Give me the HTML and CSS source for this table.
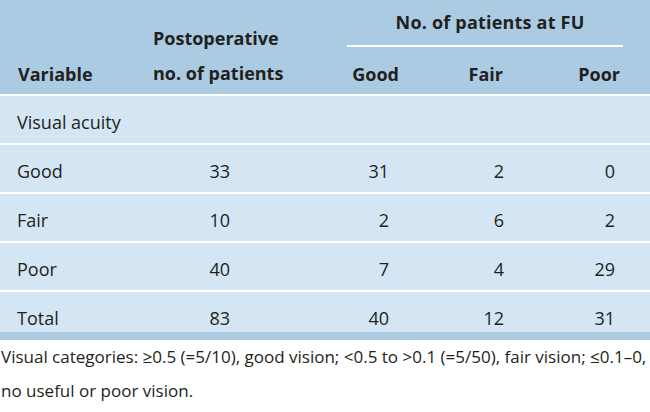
FILE: index.html
```html
<!DOCTYPE html>
<html>
<head>
<meta charset="utf-8">
<link rel="stylesheet" href="styles.css">
</head>
<body>
<table class="data">
  <colgroup>
    <col class="c-var"><col class="c-post"><col class="c-good"><col class="c-fair"><col class="c-poor">
  </colgroup>
  <thead>
    <tr>
      <th rowspan="2" class="h-var">Variable</th>
      <th rowspan="2" class="h-post">Postoperative<br>no. of patients</th>
      <th colspan="3" class="h-group"><div class="group-label">No. of patients at FU</div></th>
    </tr>
    <tr>
      <th class="h-sub h-good">Good</th>
      <th class="h-sub h-fair">Fair</th>
      <th class="h-sub h-poor">Poor</th>
    </tr>
  </thead>
  <tbody>
    <tr><td class="lbl">Visual acuity</td><td></td><td></td><td></td><td></td></tr>
    <tr><td class="lbl">Good</td><td class="n-post">33</td><td class="n-good">31</td><td class="n-fair">2</td><td class="n-poor">0</td></tr>
    <tr><td class="lbl">Fair</td><td class="n-post">10</td><td class="n-good">2</td><td class="n-fair">6</td><td class="n-poor">2</td></tr>
    <tr><td class="lbl">Poor</td><td class="n-post">40</td><td class="n-good">7</td><td class="n-fair">4</td><td class="n-poor">29</td></tr>
    <tr class="total"><td class="lbl">Total</td><td class="n-post">83</td><td class="n-good">40</td><td class="n-fair">12</td><td class="n-poor">31</td></tr>
  </tbody>
</table>
<p class="note"><span class="note-line">Visual categories: ≥0.5 (=5/10), good vision; &lt;0.5 to &gt;0.1 (=5/50), fair vision; ≤0.1–0,</span><br>no useful or poor vision.</p>
</body>
</html>
```

FILE: styles.css
```css
html, body {
  margin: 0;
  padding: 0;
  background: #ffffff;
  overflow: hidden;
}
body {
  width: 650px;
  height: 412px;
  font-family: "Open Sans", "DejaVu Sans", sans-serif;
  color: #231f20;
}
.data {
  width: 650px;
  table-layout: fixed;
  border-collapse: separate;
  border-spacing: 0;
  font-size: 18px;
  line-height: 24px;
}
.c-var { width: 145px; }
.c-post { width: 155px; }
.c-good { width: 130px; }
.c-fair { width: 110px; }
.c-poor { width: 110px; }

thead th {
  background: #aacbe1;
  font-weight: 700;
  vertical-align: top;
  padding: 0;
  white-space: nowrap;
}
.h-var {
  text-align: left;
  padding: 62px 0 8px 18px;
}
.h-post {
  text-align: left;
  line-height: 35px;
  padding: 21px 0 3px 8px;
}
.h-group {
  height: 47px;
}
.group-label {
  margin: 0 27px 0 47px;
  padding: 10px 0 11px 10px;
  border-bottom: 2px solid #ffffff;
  text-align: center;
  letter-spacing: 0.2px;
}
.h-sub {
  text-align: right;
  padding-top: 15px;
  padding-bottom: 8px;
}
.h-good { padding-right: 31px; }
.h-fair { padding-right: 37px; }
.h-poor { padding-right: 30px; }

tbody td {
  background: #d4e6f4;
  border-top: 2px solid #ffffff;
  padding: 14px 0 9px 0;
  vertical-align: top;
  white-space: nowrap;
  font-weight: 400;
}
tbody .lbl {
  text-align: left;
  padding-left: 17px;
}
.n-post { text-align: right; padding-right: 70px; }
.n-good { text-align: right; padding-right: 41px; }
.n-fair { text-align: right; padding-right: 36px; }
.n-poor { text-align: right; padding-right: 35px; }

.total td {
  padding-bottom: 2px;
  border-bottom: 8px solid #aacbe1;
}

.note {
  margin: 0;
  padding: 0 0 0 1px;
  font-size: 17px;
  line-height: 34px;
  white-space: nowrap;
}
```
